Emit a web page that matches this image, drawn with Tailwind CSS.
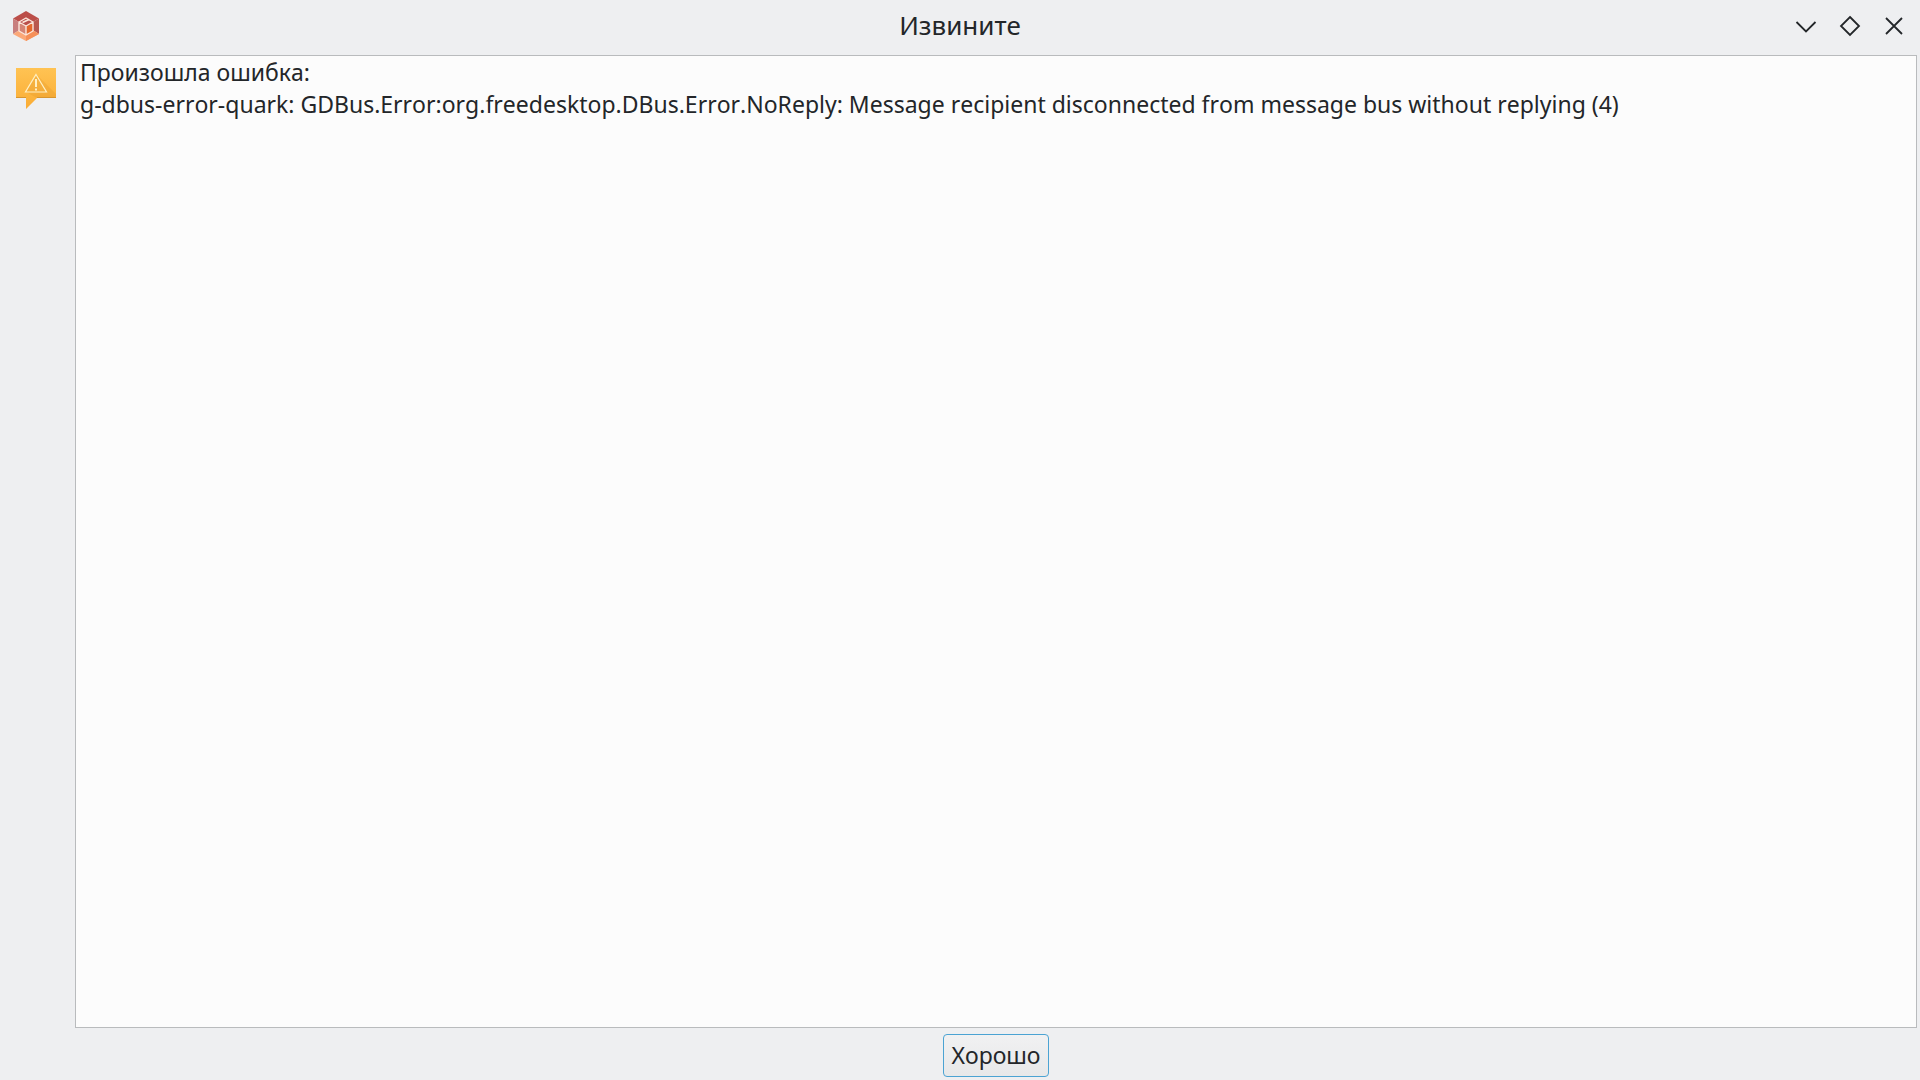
<!DOCTYPE html>
<html lang="ru">

<head>
    <meta charset="UTF-8">
    <meta name="viewport" content="width=device-width, initial-scale=1.0">
    <title>Извините</title>
    <script src="https://cdn.jsdelivr.net/npm/@tailwindcss/browser@4"></script>
</head>

<body class="h-screen flex flex-col bg-[#eeeff1] text-[#232629] text-[23px] font-['Noto_Sans',sans-serif] [font-kerning:none]">

    <!-- title bar -->
    <header class="grid grid-cols-[1fr_auto_1fr] items-center h-[55px] pb-1 px-3">
        <svg class="w-7 h-8" viewBox="0 0 28 32" aria-hidden="true">
            <path d="M14 1 27 8.500 14 16 1 8.500z" fill="#bb4e49" />
            <path d="M1 8.500 14 16 1 24z" fill="#c87f7e" />
            <path d="M27 8.500 14 16 27 24z" fill="#b9584f" />
            <path d="M1 24 14 16 27 24 14 31z" fill="#fba878" />
            <path d="M14 31 27 24 20 20 14 25z" fill="#f58f58" />
            <path d="M7 12 14 16v9l-7-4z" fill="#d58474" />
            <path d="M14 16 21 12v9l-7 4z" fill="#e4682c" />
            <path d="M14 8 21 12 14 16 7 12z" fill="#b9504b" />
            <path d="M14 8 21 12v9l-7 4-7-4v-9zM7 12l7 4 7-4M14 16v9" fill="none" stroke="#fbe6dc" stroke-width="1.400" stroke-linejoin="round" />
            <path d="M10.500 12.500 17 9.500" stroke="#fbe6dc" stroke-width="1.800" />
        </svg>
        <h1 class="text-[26px] leading-8 pb-0.5">Извините</h1>
        <div class="flex justify-end gap-5 pr-0.5">
            <button class="w-6 h-6" aria-label="Свернуть">
                <svg class="w-6 h-6" viewBox="0 0 24 24" fill="none" stroke="currentColor" stroke-width="1.800">
                    <path d="M2.500 8 12 17.500 21.500 8" />
                </svg>
            </button>
            <button class="w-6 h-6" aria-label="Развернуть">
                <svg class="w-6 h-6" viewBox="0 0 24 24" fill="none" stroke="currentColor" stroke-width="1.800">
                    <path d="M12 3 21 12 12 21 3 12z" />
                </svg>
            </button>
            <button class="w-6 h-6" aria-label="Закрыть">
                <svg class="w-6 h-6" viewBox="0 0 24 24" fill="none" stroke="currentColor" stroke-width="1.800">
                    <path d="M4 4 20 20M20 4 4 20" />
                </svg>
            </button>
        </div>
    </header>

    <main class="flex flex-1 min-h-0 pr-[3px]">
        <div class="w-[75px] pl-4 pt-3">
            <svg class="w-10 h-[42px]" viewBox="0 0 40 42" aria-hidden="true">
                <defs>
                    <linearGradient id="bubble" x1="0" y1="0" x2="0" y2="1">
                        <stop offset="0" stop-color="#ffc353" />
                        <stop offset="1" stop-color="#faac34" />
                    </linearGradient>
                </defs>
                <path d="M0 1h40v30H21L10 42V31H0z" fill="url(#bubble)" />
                <path d="M20 7 40 27v4H21l-11-6z" fill="#d98f1e" fill-opacity="0.220" />
                <path d="M0 30h10v1H0zM21 30h19v1H21z" fill="#d8952d" />
                <path d="M20 7.500 30.500 25H9.500z" fill="none" stroke="#fff0c4" stroke-width="1.200" />
                <path d="M19 12h2v8h-2zM19 21.500h2v2h-2z" fill="#fff0c4" />
            </svg>
        </div>

        <form class="flex flex-col flex-1">
            <textarea aria-label="Текст ошибки" readonly class="flex-1 resize-none outline-none bg-[#fcfcfc] border border-[#b9bbbd] px-1 leading-8">Произошла ошибка:
g-dbus-error-quark: GDBus.Error:org.freedesktop.DBus.Error.NoReply: Message recipient disconnected from message bus without replying (4)</textarea>
            <div class="flex justify-center pt-1.5 pb-[3px]">
                <button type="button" class="h-[43px] px-[7px] border border-[#4ba3d3] rounded-[4px] bg-linear-to-b from-[#f1f1f2] to-[#e7e8e9]">Хорошо</button>
            </div>
        </form>
    </main>

</body>

</html>
